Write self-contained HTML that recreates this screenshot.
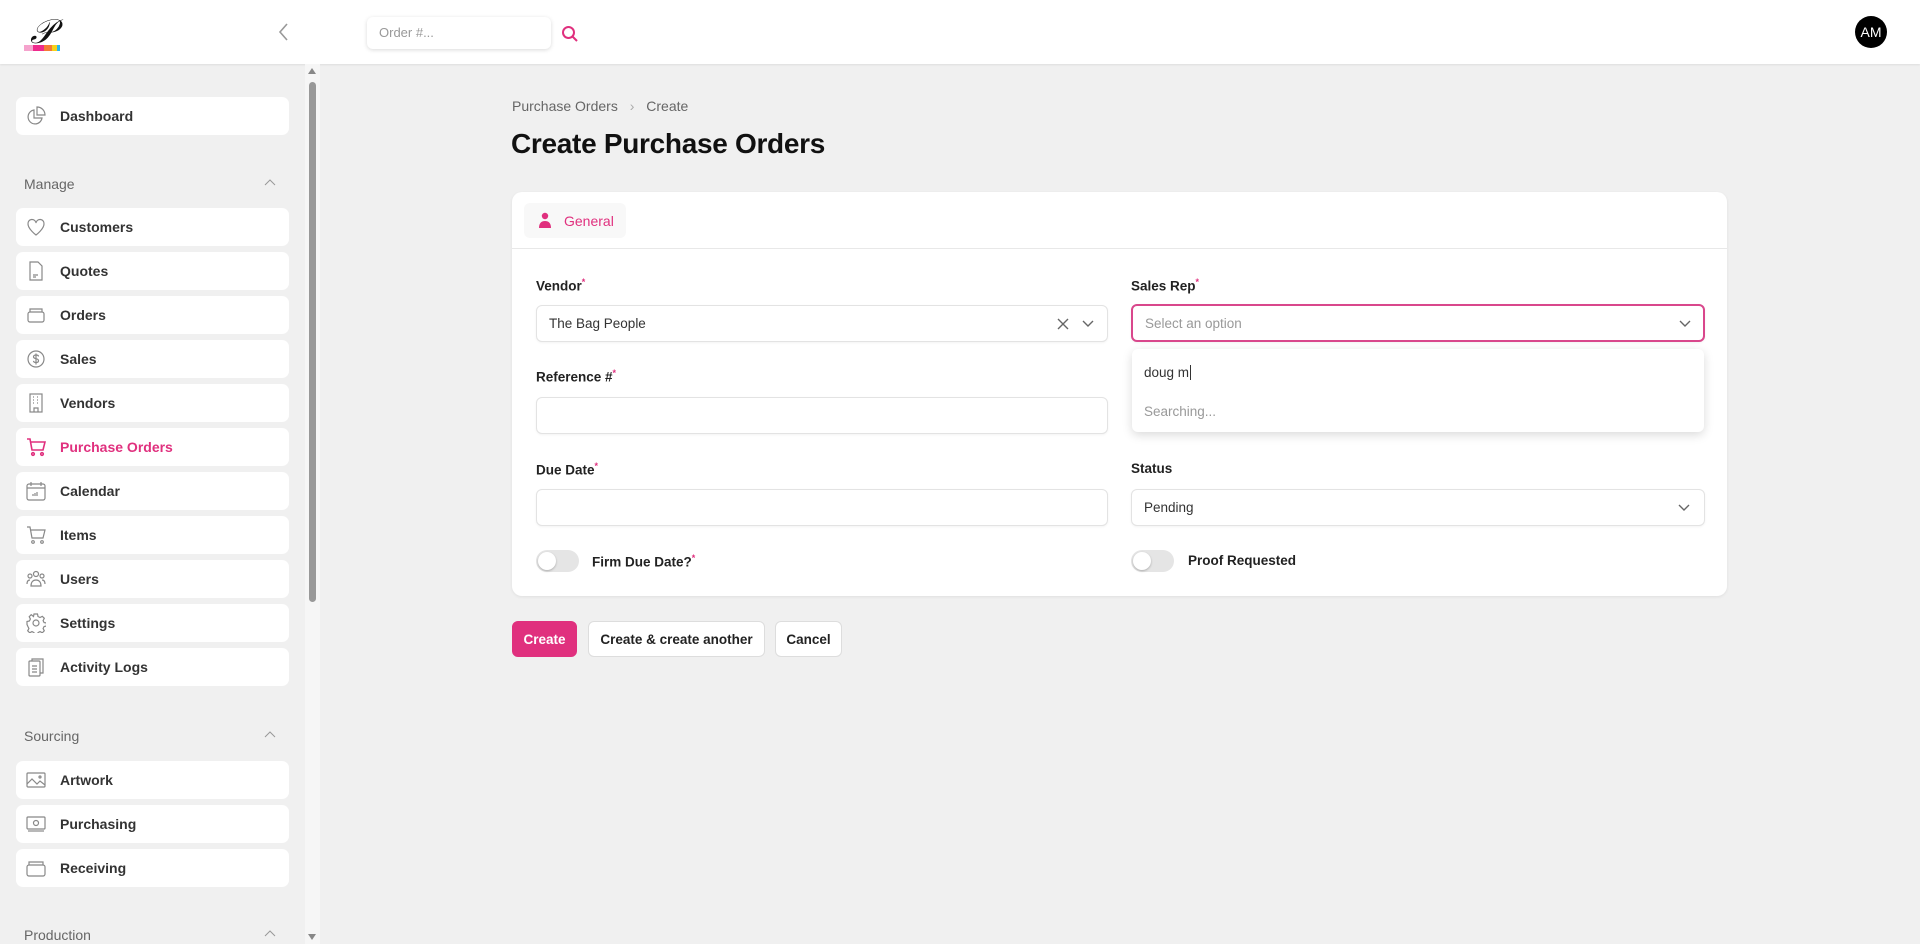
<!DOCTYPE html>
<html><head><meta charset="utf-8"><style>
*{box-sizing:border-box;margin:0;padding:0}
body{width:1920px;height:944px;overflow:hidden;background:#f0f0f0;font-family:"Liberation Sans",sans-serif;color:#222;position:relative}
.abs{position:absolute}
header{position:absolute;left:0;top:0;width:1920px;height:64px;background:#fff;box-shadow:0 1px 2px rgba(0,0,0,.08)}
.nav{position:absolute;left:16px;width:273px;height:38px;background:#fff;border-radius:7px;font-size:14px;font-weight:bold;color:#333;display:flex;align-items:center;padding-left:44px}
.nav svg{position:absolute;left:10px;top:9px}
.sec{position:absolute;left:24px;font-size:14px;color:#666}
.secchev{position:absolute;left:264px}
.lbl{position:absolute;font-size:13.5px;font-weight:bold;color:#222}
.lbl sup{color:#e0307e;font-size:9px}
.inp{position:absolute;height:37px;background:#fff;border:1px solid #e3e3e3;border-radius:6px;box-shadow:0 1px 2px rgba(0,0,0,.05);font-size:13.5px;color:#333;display:flex;align-items:center;padding-left:12px}
.tog{position:absolute;width:43px;height:22px;border-radius:11px;background:#e5e5e5}
.tog:after{content:"";position:absolute;left:2px;top:2px;width:18px;height:18px;border-radius:50%;background:#fff;box-shadow:0 1px 2px rgba(0,0,0,.25)}
.btn{position:absolute;top:621px;height:36px;border-radius:6px;font-size:13.5px;font-weight:bold;display:flex;align-items:center;justify-content:center;background:#fff;border:1px solid #ddd;color:#222}
</style></head><body>
<header>
 <div class="abs" style="left:30px;top:18px;font-family:'Liberation Serif',serif;font-style:italic;font-size:34px;line-height:30px;color:#111">𝒫</div>
 <div class="abs" style="left:24px;top:45px;width:36px;height:6px;display:flex"><i style="flex:1;background:#f5a3cd"></i><i style="flex:1.3;background:#ee2a8c"></i><i style="flex:1;background:#f47b36"></i><i style="flex:.5;background:#f6d11a"></i><i style="flex:.4;background:#2ab7ea"></i></div>
 <svg class="abs" style="left:277px;top:22px" width="14" height="20" viewBox="0 0 14 20"><path d="M10 2L3 10l7 8" fill="none" stroke="#999" stroke-width="1.6"/></svg>
 <div class="abs" style="left:367px;top:17px;width:184px;height:32px;background:#fff;border-radius:6px;box-shadow:0 1px 4px rgba(0,0,0,.15);font-size:13px;color:#999;padding:8px 12px">Order #...</div>
 <svg class="abs" style="left:561px;top:25px" width="18" height="18" viewBox="0 0 18 18"><circle cx="7.5" cy="7.5" r="5.5" fill="none" stroke="#e0307e" stroke-width="2"/><path d="M11.5 11.5l4.5 4.5" stroke="#e0307e" stroke-width="2"/></svg>
 <div class="abs" style="left:1855px;top:16px;width:32px;height:32px;border-radius:50%;background:#000;color:#fff;font-size:14px;display:flex;align-items:center;justify-content:center">AM</div>
</header>
<div class="abs" style="left:305px;top:64px;width:15px;height:880px;background:#f6f6f6"></div>
<div class="abs" style="left:309px;top:82px;width:7px;height:520px;border-radius:4px;background:#999"></div>
<div class="abs" style="left:308px;top:68px;border:4px solid transparent;border-bottom:6px solid #888;border-top:0"></div>
<div class="abs" style="left:308px;top:934px;border:4px solid transparent;border-top:6px solid #888;border-bottom:0"></div>

<div class="nav" style="top:97px"><svg width="20" height="20" viewBox="0 0 20 20" fill="none" stroke="#888" stroke-width="1.2"><path d="M8 4a7 7 0 1 0 8 8H8z"/><path d="M11 1v8h8a8 8 0 0 0-8-8z"/></svg>Dashboard</div>
<div class="sec" style="top:176px">Manage</div><svg class="secchev" style="top:178px" width="12" height="8"><path d="M1 7l5-5 5 5" fill="none" stroke="#999"/></svg>
<div class="nav" style="top:208px"><svg width="20" height="20" viewBox="0 0 20 20" fill="none" stroke="#888" stroke-width="1.2"><path d="M10 18S2 12 2 7a4 4 0 0 1 8-1 4 4 0 0 1 8 1c0 5-8 11-8 11z"/></svg>Customers</div>
<div class="nav" style="top:252px"><svg width="20" height="20" viewBox="0 0 20 20" fill="none" stroke="#888" stroke-width="1.2"><path d="M4 1h8l4 4v14H4z M7 14h5 M7 16h3"/></svg>Quotes</div>
<div class="nav" style="top:296px"><svg width="20" height="20" viewBox="0 0 20 20" fill="none" stroke="#888" stroke-width="1.2"><rect x="2" y="7" width="16" height="10" rx="2"/><path d="M4 7V4h12v3"/></svg>Orders</div>
<div class="nav" style="top:340px"><svg width="20" height="20" viewBox="0 0 20 20" fill="none" stroke="#888" stroke-width="1.2"><circle cx="10" cy="10" r="8"/><path d="M12.5 7.5c0-1-1-1.5-2.5-1.5s-2.5.7-2.5 1.8 1 1.6 2.5 1.9 2.5.8 2.5 2-1 1.8-2.5 1.8-2.5-.6-2.5-1.6M10 4.5v11"/></svg>Sales</div>
<div class="nav" style="top:384px"><svg width="20" height="20" viewBox="0 0 20 20" fill="none" stroke="#888" stroke-width="1.2"><rect x="4" y="1" width="12" height="18"/><path d="M7 4h1M11 4h1M7 7h1M11 7h1M7 10h1M11 10h1M8 19v-4h4v4"/></svg>Vendors</div>
<div class="nav" style="top:428px;color:#e0307e"><svg width="20" height="20" viewBox="0 0 20 20" fill="none" stroke="#e0307e" stroke-width="1.6"><path d="M1 2h3l2 11h11l2-8H5"/><circle cx="7" cy="17" r="1.3"/><circle cx="16" cy="17" r="1.3"/></svg>Purchase Orders</div>
<div class="nav" style="top:472px"><svg width="20" height="20" viewBox="0 0 20 20" fill="none" stroke="#888" stroke-width="1.2"><rect x="1" y="3" width="18" height="16" rx="2"/><path d="M1 7h18M5 1v4M15 1v4M7 15v-2M9 15v-3M11 15v-4"/></svg>Calendar</div>
<div class="nav" style="top:516px"><svg width="20" height="20" viewBox="0 0 20 20" fill="none" stroke="#888" stroke-width="1.2"><path d="M1 2h3l2 11h11l2-8H5"/><circle cx="7" cy="17" r="1.3"/><circle cx="16" cy="17" r="1.3"/></svg>Items</div>
<div class="nav" style="top:560px"><svg width="20" height="20" viewBox="0 0 20 20" fill="none" stroke="#888" stroke-width="1.2"><circle cx="10" cy="5" r="2.5"/><circle cx="4" cy="7" r="2"/><circle cx="16" cy="7" r="2"/><path d="M5 17c0-4 2-6 5-6s5 2 5 6zM1 15c0-3 1-4 3-4M19 15c0-3-1-4-3-4"/></svg>Users</div>
<div class="nav" style="top:604px"><svg width="20" height="20" viewBox="0 0 20 20" fill="none" stroke="#888" stroke-width="1.2"><circle cx="10" cy="10" r="3"/><path d="M8.5 1h3l.5 2.5 2 1 2.3-1.2 2 2-1.2 2.3 1 2 2.4.4v3l-2.4.5-1 2 1.2 2.3-2 2-2.3-1.2-2 1-.5 2.4h-3l-.5-2.4-2-1-2.3 1.2-2-2 1.2-2.3-1-2L1 11.5v-3l2.4-.5 1-2-1.2-2.3 2-2L7.5 3.5 8 1z"/></svg>Settings</div>
<div class="nav" style="top:648px"><svg width="20" height="20" viewBox="0 0 20 20" fill="none" stroke="#888" stroke-width="1.2"><rect x="3" y="4" width="11" height="15" rx="1"/><path d="M6 4V2h11v14h-3M6 9h5M6 12h5M6 15h5"/></svg>Activity Logs</div>
<div class="sec" style="top:728px">Sourcing</div><svg class="secchev" style="top:730px" width="12" height="8"><path d="M1 7l5-5 5 5" fill="none" stroke="#999"/></svg>
<div class="nav" style="top:761px"><svg width="20" height="20" viewBox="0 0 20 20" fill="none" stroke="#888" stroke-width="1.2"><rect x="1" y="3" width="18" height="14" rx="1"/><path d="M1 14l5-5 5 5 3-3 5 4"/><circle cx="14" cy="7" r="1"/></svg>Artwork</div>
<div class="nav" style="top:805px"><svg width="20" height="20" viewBox="0 0 20 20" fill="none" stroke="#888" stroke-width="1.2"><rect x="1" y="3" width="18" height="12" rx="1"/><circle cx="10" cy="9" r="2.5"/><path d="M2 17h16"/></svg>Purchasing</div>
<div class="nav" style="top:849px"><svg width="20" height="20" viewBox="0 0 20 20" fill="none" stroke="#888" stroke-width="1.2"><rect x="1" y="7" width="18" height="11" rx="2"/><path d="M3 7V4h14v3"/></svg>Receiving</div>
<div class="sec" style="top:927px">Production</div><svg class="secchev" style="top:929px" width="12" height="8"><path d="M1 7l5-5 5 5" fill="none" stroke="#999"/></svg>

<div class="abs" style="left:512px;top:98px;font-size:14px;color:#666">Purchase Orders <span style="margin:0 8px;color:#aaa">›</span> Create</div>
<div class="abs" style="left:511px;top:128px;font-size:28px;font-weight:bold;color:#111;letter-spacing:-.3px">Create Purchase Orders</div>

<div class="abs" style="left:512px;top:192px;width:1215px;height:404px;background:#fff;border-radius:10px;box-shadow:0 1px 3px rgba(0,0,0,.07)">
 <div class="abs" style="left:0;top:56px;width:100%;height:1px;background:#e8e8e8"></div>
 <div class="abs" style="left:12px;top:11px;width:102px;height:35px;background:#f8f8f8;border-radius:6px;font-size:14px;color:#e0307e;display:flex;align-items:center;padding-left:40px">General
  <svg class="abs" style="left:14px;top:9px" width="14" height="17" viewBox="0 0 14 17"><circle cx="7" cy="4" r="3.2" fill="#e0307e"/><path d="M1 16c0-5 2.5-7 6-7s6 2 6 7z" fill="#e0307e"/></svg></div>
</div>
<div class="lbl" style="left:536px;top:277px">Vendor<sup>*</sup></div>
<div class="inp" style="left:536px;top:305px;width:572px">The Bag People
 <svg class="abs" style="left:520px;top:12px" width="12" height="12"><path d="M1 1l10 10M11 1L1 11" stroke="#666" stroke-width="1.4"/></svg>
 <svg class="abs" style="left:545px;top:14px" width="12" height="8"><path d="M1 1l5 5 5-5" fill="none" stroke="#666" stroke-width="1.4"/></svg></div>
<div class="lbl" style="left:1131px;top:277px">Sales Rep<sup>*</sup></div>
<div class="inp" style="left:1131px;top:304px;width:574px;height:38px;border:2px solid #d9478c;color:#999">Select an option
 <svg class="abs" style="left:546px;top:14px" width="12" height="8"><path d="M1 1l5 5 5-5" fill="none" stroke="#666" stroke-width="1.4"/></svg></div>
<div class="lbl" style="left:536px;top:368px">Reference #<sup>*</sup></div>
<div class="inp" style="left:536px;top:397px;width:572px"></div>
<div class="abs" style="left:1132px;top:349px;width:572px;height:83px;background:#fff;border-radius:6px;box-shadow:0 3px 10px rgba(0,0,0,.15)">
 <div class="abs" style="left:12px;top:16px;font-size:13.5px;color:#333">doug m<span style="border-left:1px solid #333;margin-left:1px"></span></div>
 <div class="abs" style="left:12px;top:55px;font-size:13.5px;color:#999">Searching...</div>
</div>
<div class="lbl" style="left:536px;top:461px">Due Date<sup>*</sup></div>
<div class="inp" style="left:536px;top:489px;width:572px"></div>
<div class="lbl" style="left:1131px;top:461px">Status</div>
<div class="inp" style="left:1131px;top:489px;width:574px">Pending
 <svg class="abs" style="left:546px;top:14px" width="12" height="8"><path d="M1 1l5 5 5-5" fill="none" stroke="#666" stroke-width="1.4"/></svg></div>
<div class="tog" style="left:536px;top:550px"></div>
<div class="lbl" style="left:592px;top:553px">Firm Due Date?<sup>*</sup></div>
<div class="tog" style="left:1131px;top:550px"></div>
<div class="lbl" style="left:1188px;top:553px">Proof Requested</div>

<div class="btn" style="left:512px;width:65px;background:#e0307e;border-color:#e0307e;color:#fff">Create</div>
<div class="btn" style="left:588px;width:177px">Create &amp; create another</div>
<div class="btn" style="left:775px;width:67px">Cancel</div>
</body></html>
